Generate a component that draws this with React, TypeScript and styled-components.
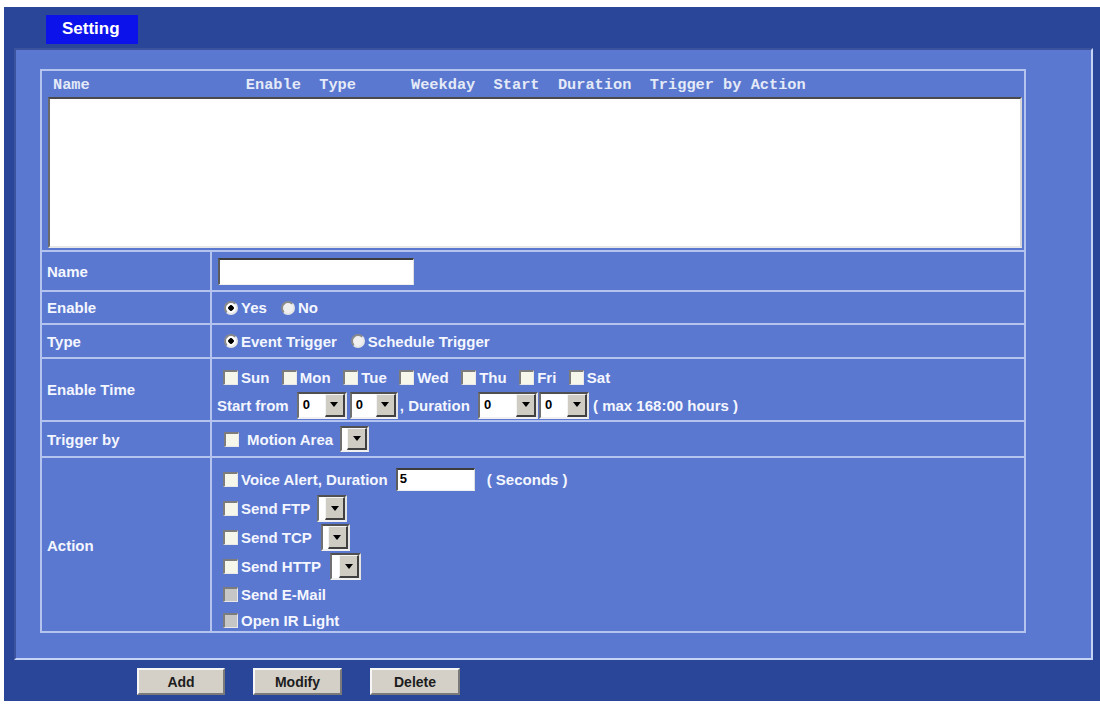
import React from "react";
import styled, { createGlobalStyle, css } from "styled-components";

const GlobalStyle = createGlobalStyle`
  body {
    margin: 0;
    background: #ffffff;
    font-family: "Liberation Sans", Arial, sans-serif;
  }
`;

const Frame = styled.div`
  margin: 7px 0 0 4px;
  width: 1096px;
  height: 694px;
  box-sizing: border-box;
  background: #2a4698;
  padding: 8px 0 0 10px;
  display: flex;
  flex-direction: column;
`;

const Tab = styled.div`
  margin-left: 32px;
  width: 92px;
  height: 29px;
  box-sizing: border-box;
  padding-left: 16px;
  background: #0b12ea;
  color: #ffffff;
  font-size: 17px;
  font-weight: bold;
  line-height: 28px;
`;

const Panel = styled.div`
  margin-top: 4px;
  width: 1079px;
  height: 612px;
  box-sizing: border-box;
  background: #5a78cf;
  border-top: 2px solid #3b529f;
  border-left: 2px solid #3b529f;
  border-right: 2px solid #c5d3f5;
  border-bottom: 2px solid #c5d3f5;
  padding: 19px 0 0 24px;
`;

const Table = styled.div`
  width: 986px;
  height: 564px;
  box-sizing: border-box;
  border: 2px solid #b4c4ee;
  display: flex;
  flex-direction: column;
`;

const Header = styled.div`
  height: 26px;
  padding-left: 11px;
  font-family: "Liberation Mono", "Courier New", monospace;
  font-size: 15.3px;
  font-weight: bold;
  line-height: 28px;
  color: #e4eaf8;
  white-space: pre;
`;

const ListBox = styled.div`
  margin: 0 2px 0 6px;
  height: 151px;
  box-sizing: border-box;
  background: #ffffff;
  border-top: 2px solid #4a4a4a;
  border-left: 2px solid #6a6a6a;
  border-right: 2px solid #d8d8d8;
  border-bottom: 2px solid #e8e8e8;
`;

const Rows = styled.div`
  margin-top: 2px;
  display: flex;
  flex-direction: column;
`;

const Row = styled.div<{ $h: number }>`
  display: grid;
  grid-template-columns: 170px 1fr;
  height: ${(p) => p.$h}px;
  box-sizing: border-box;
  border-top: 2px solid #b4c4ee;
  overflow: hidden;
`;

const Label = styled.div`
  display: flex;
  align-items: center;
  padding-left: 5px;
  border-right: 2px solid #b4c4ee;
  color: #f4f6ff;
  font-size: 15px;
  font-weight: bold;
`;

const Value = styled.div<{ $pl?: number; $column?: boolean; $pt?: number }>`
  display: flex;
  padding-left: ${(p) => p.$pl ?? 12}px;
  ${(p) =>
    p.$column
      ? css`
          flex-direction: column;
          padding-top: ${p.$pt ?? 0}px;
        `
      : css`
          align-items: center;
        `}
`;

const Line = styled.div<{ $h?: number; $gap?: number }>`
  display: flex;
  align-items: center;
  height: ${(p) => p.$h ?? 27}px;
  gap: ${(p) => p.$gap ?? 0}px;
  margin-bottom: 2px;

  &:last-child {
    margin-bottom: 0;
  }
`;

const Item = styled.label<{ $gap?: number; $ml?: number }>`
  display: inline-flex;
  align-items: center;
  gap: ${(p) => p.$gap ?? 3}px;
  margin-left: ${(p) => p.$ml ?? 0}px;
  color: #f4f6ff;
  font-size: 15px;
  font-weight: bold;
  white-space: pre;
`;

const Text = styled.span<{ $ml?: number }>`
  margin-left: ${(p) => p.$ml ?? 0}px;
  color: #f4f6ff;
  font-size: 15px;
  font-weight: bold;
  white-space: pre;
`;

const Check = styled.span<{ $disabled?: boolean }>`
  display: inline-block;
  width: 15px;
  height: 15px;
  box-sizing: border-box;
  background: ${(p) => (p.$disabled ? "#c6c6c6" : "#f6f6ea")};
  border-top: 2px solid #7c7c7c;
  border-left: 2px solid #7c7c7c;
  border-right: 1px solid #e8e8e8;
  border-bottom: 1px solid #e8e8e8;
`;

const Radio = styled.span<{ $on?: boolean }>`
  display: inline-block;
  width: 14px;
  height: 14px;
  border-radius: 50%;
  box-sizing: border-box;
  border: 2px solid #8a8a8a;
  border-right-color: #e6e6e6;
  border-bottom-color: #e6e6e6;
  background: ${(p) =>
    p.$on
      ? "radial-gradient(circle, #000 0 2.5px, #fff 3px)"
      : "#f0f0f0"};
`;

const Input = styled.div<{ $w: number; $h: number; $ml?: number }>`
  width: ${(p) => p.$w}px;
  height: ${(p) => p.$h}px;
  margin-left: ${(p) => p.$ml ?? 0}px;
  box-sizing: border-box;
  background: #ffffff;
  border-top: 2px solid #3c3c3c;
  border-left: 2px solid #5c5c5c;
  border-right: 1px solid #e0e0e0;
  border-bottom: 1px solid #f0f0f0;
  padding-left: 2px;
  font-size: 13px;
  font-weight: bold;
  line-height: 18px;
  color: #000;
`;

const Select = styled.div<{ $w: number; $h?: number; $ml?: number }>`
  display: inline-flex;
  width: ${(p) => p.$w}px;
  height: ${(p) => p.$h ?? 27}px;
  margin-left: ${(p) => p.$ml ?? 0}px;
  box-sizing: border-box;
  background: #ffffff;
  border-top: 2px solid #505050;
  border-left: 2px solid #707070;
  border-right: 2px solid #e4e4e4;
  border-bottom: 2px solid #f0f0f0;
`;

const SelectText = styled.span`
  flex: 1;
  padding-left: 4px;
  font-size: 13px;
  font-weight: bold;
  line-height: 21px;
  color: #000;
`;

const Arrow = styled.span`
  width: 20px;
  display: flex;
  align-items: center;
  justify-content: center;
  box-sizing: border-box;
  background: #cfccc4;
  border-top: 1px solid #f4f4f4;
  border-left: 1px solid #f4f4f4;
  border-right: 2px solid #404040;
  border-bottom: 2px solid #404040;

  &::after {
    content: "";
    border-left: 4px solid transparent;
    border-right: 4px solid transparent;
    border-top: 5px solid #000;
  }
`;

const ButtonBar = styled.div`
  display: flex;
  margin-top: 8px;
  padding-left: 123px;
`;

const Button = styled.button<{ $w: number; $ml?: number }>`
  width: ${(p) => p.$w}px;
  height: 27px;
  margin-left: ${(p) => p.$ml ?? 0}px;
  padding: 0;
  background: #d4d0c8;
  border-top: 2px solid #f6f6f6;
  border-left: 2px solid #f6f6f6;
  border-right: 2px solid #7a7a7a;
  border-bottom: 2px solid #7a7a7a;
  font-family: "Liberation Sans", Arial, sans-serif;
  font-size: 14px;
  font-weight: bold;
  color: #1c1c1c;
`;

const days = ["Sun", "Mon", "Tue", "Wed", "Thu", "Fri", "Sat"];

const Sel = ({ w, value, h, ml }: { w: number; value?: string; h?: number; ml?: number }) => (
  <Select $w={w} $h={h} $ml={ml}>
    <SelectText>{value}</SelectText>
    <Arrow />
  </Select>
);

export default function App() {
  return (
    <>
      <GlobalStyle />
      <Frame>
        <Tab>Setting</Tab>
        <Panel>
          <Table>
            <Header>
              {"Name                 Enable  Type      Weekday  Start  Duration  Trigger by Action"}
            </Header>
            <ListBox />
            <Rows>
              <Row $h={40}>
                <Label>Name</Label>
                <Value $pl={6}>
                  <Input $w={196} $h={27} />
                </Value>
              </Row>
              <Row $h={33}>
                <Label>Enable</Label>
                <Value>
                  <Item>
                    <Radio $on />
                    Yes
                  </Item>
                  <Item $ml={14}>
                    <Radio />
                    No
                  </Item>
                </Value>
              </Row>
              <Row $h={34}>
                <Label>Type</Label>
                <Value>
                  <Item>
                    <Radio $on />
                    Event Trigger
                  </Item>
                  <Item $ml={14}>
                    <Radio />
                    Schedule Trigger
                  </Item>
                </Value>
              </Row>
              <Row $h={63}>
                <Label>Enable Time</Label>
                <Value $column $pl={5} $pt={6}>
                  <Line $h={24} $gap={12.5}>
                    {days.map((d, i) => (
                      <Item key={d} $ml={i === 0 ? 6 : 0}>
                        <Check />
                        {d}
                      </Item>
                    ))}
                  </Line>
                  <Line $h={28}>
                    <Text>Start from </Text>
                    <Sel w={50} value="0" ml={4} />
                    <Sel w={48} value="0" ml={3} />
                    <Text $ml={2}>, Duration </Text>
                    <Sel w={60} value="0" ml={4} />
                    <Sel w={50} value="0" ml={1} />
                    <Text $ml={4}>( max 168:00 hours )</Text>
                  </Line>
                </Value>
              </Row>
              <Row $h={36}>
                <Label>Trigger by</Label>
                <Value>
                  <Item $gap={8}>
                    <Check />
                    Motion Area
                  </Item>
                  <Sel w={29} h={26} ml={7} />
                </Value>
              </Row>
              <Row $h={175}>
                <Label>Action</Label>
                <Value $column $pl={11} $pt={8}>
                  <Line $h={27}>
                    <Item>
                      <Check />
                      Voice Alert, Duration
                    </Item>
                    <Input $w={79} $h={23} $ml={8}>
                      5
                    </Input>
                    <Text $ml={12}>( Seconds )</Text>
                  </Line>
                  <Line $h={27}>
                    <Item>
                      <Check />
                      Send FTP
                    </Item>
                    <Sel w={30} ml={7} />
                  </Line>
                  <Line $h={27}>
                    <Item>
                      <Check />
                      Send TCP
                    </Item>
                    <Sel w={29} ml={9} />
                  </Line>
                  <Line $h={27}>
                    <Item>
                      <Check />
                      Send HTTP
                    </Item>
                    <Sel w={31} ml={9} />
                  </Line>
                  <Line $h={24}>
                    <Item>
                      <Check $disabled />
                      Send E-Mail
                    </Item>
                  </Line>
                  <Line $h={24}>
                    <Item>
                      <Check $disabled />
                      Open IR Light
                    </Item>
                  </Line>
                </Value>
              </Row>
            </Rows>
          </Table>
        </Panel>
        <ButtonBar>
          <Button $w={88}>Add</Button>
          <Button $w={89} $ml={28}>
            Modify
          </Button>
          <Button $w={90} $ml={28}>
            Delete
          </Button>
        </ButtonBar>
      </Frame>
    </>
  );
}
